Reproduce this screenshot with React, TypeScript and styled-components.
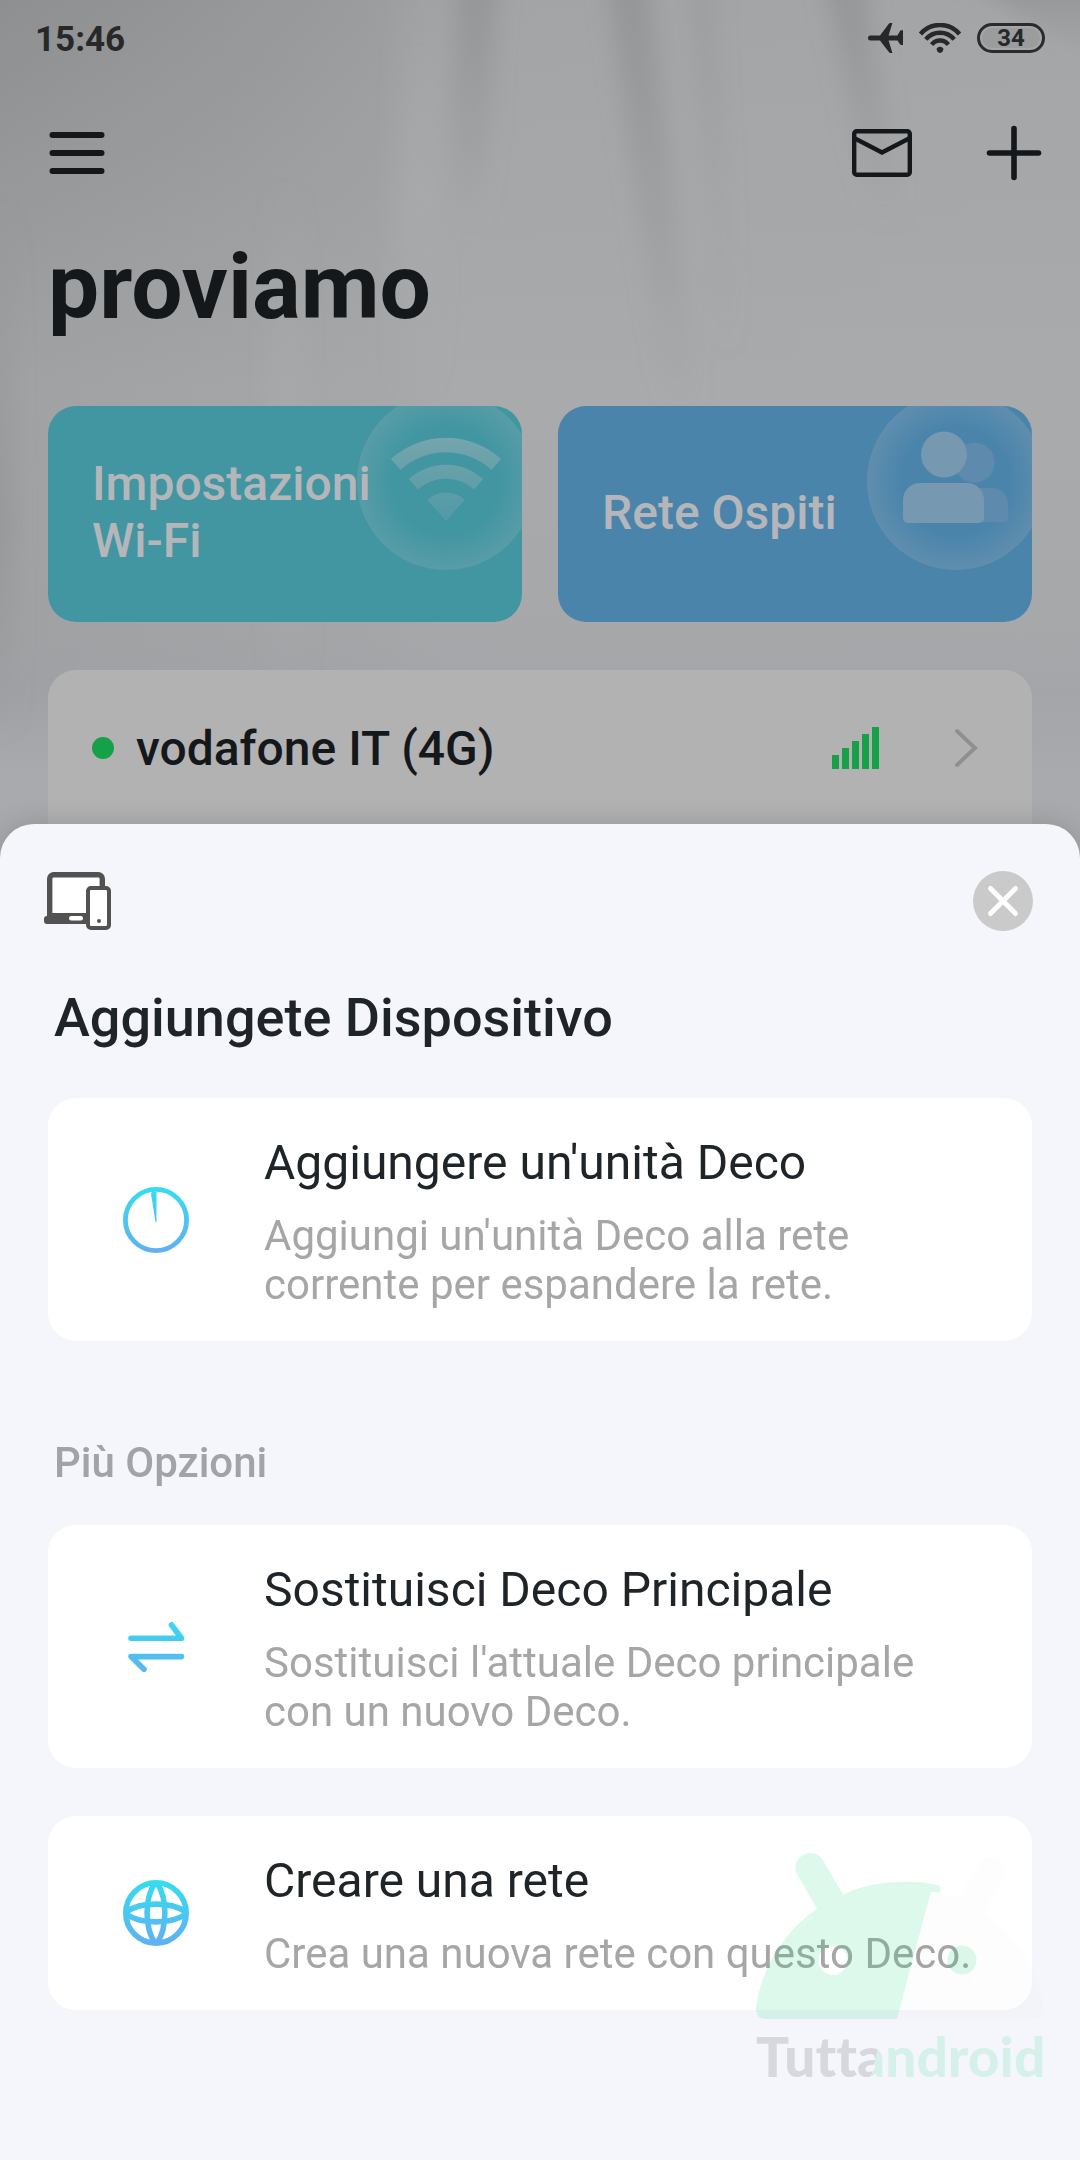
import React from "react";
import styled, { createGlobalStyle } from "styled-components";

const INK = "#14181b";
const FONT = 'Roboto, "Noto Sans", sans-serif';

const GlobalStyle = createGlobalStyle`
  *, *::before, *::after { box-sizing: border-box; }
  html, body { margin: 0; padding: 0; }
  body { background: #a8a9ab; font-family: ${FONT}; }
  button { font-family: inherit; border: 0; margin: 0; padding: 0; background: none; color: inherit; text-align: left; cursor: pointer; }
  h1, h2, h3, p { margin: 0; }
  svg { display: block; flex: none; }
`;

const Screen = styled.div`
  position: relative;
  height: 100vh;
  overflow: hidden;
`;

const Backdrop = styled.svg`
  position: absolute;
  inset: 0 0 auto 0;
  width: 100%;
  height: 860px;
`;

const Dashboard = styled.main`
  position: relative;
`;

const StatusBar = styled.div`
  display: flex;
  align-items: center;
  justify-content: space-between;
  height: 76px;
  padding: 0 35px;
  color: #272829;
`;

const Clock = styled.time`
  padding-top: 3px;
  font-size: 35px;
  line-height: 42px;
  font-weight: 700;
`;

const StatusIcons = styled.div`
  display: flex;
  align-items: center;
  gap: 16px;
`;

const Battery = styled.span`
  display: flex;
  align-items: center;
  justify-content: center;
  width: 68px;
  height: 30px;
  border: 3px solid #2a2b2c;
  border-radius: 15px;
  box-shadow: inset 0 0 0 2px #a5a6a8;
  background: #9b9c9e;
  font-size: 24px;
  line-height: 28px;
  font-weight: 700;
`;

const NavBar = styled.nav`
  display: flex;
  align-items: center;
  justify-content: space-between;
  margin-top: 47px;
  padding: 0 36px 0 47px;
  color: ${INK};
`;

const NavActions = styled.div`
  display: flex;
  gap: 72px;
`;

const IconButton = styled.button`
  display: flex;
  align-items: center;
  justify-content: center;
  width: 60px;
  height: 60px;
`;

const NetworkName = styled.h1`
  margin: 52px 48px 67px;
  font-size: 91px;
  line-height: 104px;
  font-weight: 700;
  color: ${INK};
`;

const Shortcuts = styled.div`
  display: grid;
  grid-template-columns: 1fr 1fr;
  gap: 36px;
  padding: 0 48px;
`;

const Shortcut = styled.button<{ $color: string }>`
  position: relative;
  display: flex;
  align-items: center;
  min-height: 216px;
  padding: 0 44px 4px;
  overflow: hidden;
  border-radius: 28px;
  background: ${(p) => p.$color};
  color: #b4b6ba;
  font-size: 48px;
  line-height: 57px;
  font-weight: 500;
`;

const ShortcutLabel = styled.span`
  position: relative;
  width: min-content;
`;

const WideLabel = styled(ShortcutLabel)`
  width: auto;
`;

const Emblem = styled.svg`
  position: absolute;
  top: -14px;
  right: -13px;
`;

const Connection = styled.button`
  display: flex;
  align-items: flex-start;
  width: calc(100% - 96px);
  min-height: 300px;
  margin: 48px 48px 0;
  padding: 49px 54px 0 44px;
  border-radius: 28px;
  background: #b2b2b2;
`;

const ConnectionRow = styled.span`
  display: flex;
  flex: 1;
  align-items: center;
  color: ${INK};
`;

const Dot = styled.span`
  width: 22px;
  height: 22px;
  margin-right: 22px;
  border-radius: 50%;
  background: #16a149;
`;

const ConnectionName = styled.span`
  flex: 1;
  padding-top: 2px;
  font-size: 48px;
  line-height: 56px;
  font-weight: 500;
`;

const Bars = styled.span`
  display: flex;
  align-items: flex-end;
  gap: 3px;
  margin-right: 75px;
`;

const Bar = styled.span<{ $level: number }>`
  width: 7px;
  height: ${(p) => p.$level * 7 + 7}px;
  background: #16a149;
`;

const Sheet = styled.section`
  position: fixed;
  inset: auto 0 0 0;
  padding: 47px 48px 150px;
  border-radius: 34px 34px 0 0;
  background: #f5f6fc;
  box-shadow: 0 0 28px rgba(0, 0, 0, 0.16);
`;

const SheetHeader = styled.header`
  display: flex;
  align-items: center;
  justify-content: space-between;
  margin: 0 -1px 0 -4px;
`;

const CloseButton = styled(IconButton)`
  border-radius: 50%;
  background: #cacaca;
`;

const SheetTitle = styled.h2`
  margin: 55px 6px 48px;
  font-size: 54px;
  line-height: 64px;
  font-weight: 500;
  color: #1f2428;
`;

const SectionTitle = styled.h3`
  margin: 97px 6px 38px;
  font-size: 42px;
  line-height: 49px;
  font-weight: 500;
  color: #a2a3a8;
`;

const OptionList = styled.div`
  display: grid;
  gap: 48px;
`;

const OptionCard = styled.button`
  display: flex;
  align-items: center;
  gap: 75px;
  width: 100%;
  padding: 0 54px 0 75px;
  border-radius: 28px;
  background: #fff;
`;

const OptionText = styled.span`
  display: grid;
  gap: 20px;
  padding: 37px 0 32px;
`;

const OptionTitle = styled.span`
  font-size: 48px;
  line-height: 56px;
  color: #1f2428;
`;

const OptionDetail = styled.span`
  font-size: 42px;
  line-height: 49px;
  color: #a6a6a6;
`;

const Watermark = styled.div`
  position: absolute;
  right: 36px;
  bottom: 72px;
  width: 288px;
  pointer-events: none;
`;

const WatermarkName = styled.div`
  width: max-content;
  margin-top: 4px;
  font-family: Lato, "Noto Sans", sans-serif;
  font-size: 55px;
  line-height: 64px;
  font-weight: 900;
  font-variant-ligatures: none;
  color: transparent;
  background: linear-gradient(104deg, rgba(0, 0, 0, 0.12) 42%, rgba(30, 214, 130, 0.15) 42%);
  background-clip: text;
  -webkit-background-clip: text;
`;

function BackdropArt() {
  return (
    <Backdrop viewBox="0 0 1080 860" preserveAspectRatio="none" aria-hidden="true">
      <defs>
        <linearGradient id="base" x1="0" y1="0" x2="1" y2="0">
          <stop offset="0" stopColor="#8e8f91" />
          <stop offset="0.2" stopColor="#959698" />
          <stop offset="0.34" stopColor="#9b9c9e" />
          <stop offset="0.42" stopColor="#a3a4a6" />
          <stop offset="1" stopColor="#a4a5a7" />
        </linearGradient>
        <linearGradient id="lift" x1="0" y1="0" x2="0" y2="1">
          <stop offset="0" stopColor="#adaeb0" stopOpacity="0" />
          <stop offset="0.45" stopColor="#adaeb0" stopOpacity="0.6" />
          <stop offset="0.74" stopColor="#a8a9ab" stopOpacity="0.7" />
          <stop offset="0.8" stopColor="#a4a5aa" stopOpacity="0.8" />
          <stop offset="0.9" stopColor="#a9aaad" stopOpacity="1" />
        </linearGradient>
        <linearGradient id="fold" x1="0" y1="0" x2="0" y2="1">
          <stop offset="0" stopColor="#8e8f91" stopOpacity="0.7" />
          <stop offset="1" stopColor="#8e8f91" stopOpacity="0" />
        </linearGradient>
        <linearGradient id="edge" x1="0" y1="0" x2="0" y2="1">
          <stop offset="0" stopColor="#8e8f91" stopOpacity="0" />
          <stop offset="0.6" stopColor="#8e8f91" stopOpacity="0.5" />
          <stop offset="1" stopColor="#8e8f91" stopOpacity="0" />
        </linearGradient>
        <linearGradient id="sheen" x1="0" y1="0" x2="0" y2="1">
          <stop offset="0" stopColor="#b0b1b3" stopOpacity="0" />
          <stop offset="0.5" stopColor="#b0b1b3" stopOpacity="0.35" />
          <stop offset="1" stopColor="#b0b1b3" stopOpacity="0" />
        </linearGradient>
        <filter id="soft" x="-100%" y="-10%" width="300%" height="120%">
          <feGaussianBlur stdDeviation="11 8" />
        </filter>
      </defs>
      <rect width="1080" height="860" fill="url(#base)" />
      <rect width="1080" height="860" fill="url(#lift)" />
      <g filter="url(#soft)">
        <path d="M402-20h40l-6 420h-40z" fill="url(#sheen)" />
        <path d="M456-20h42l-14 250h-38z" fill="url(#fold)" />
        <path d="M606-20h42l52 440h-34z" fill="url(#fold)" />
        <path d="M690-20h22l26 380h-18z" fill="url(#fold)" fillOpacity="0.5" />
        <path d="M824-20h40l40 250h-32z" fill="url(#fold)" />
        <path d="M960-20h140v80z" fill="url(#fold)" />
        <path d="M272 180h28l6 520h-34z" fill="url(#sheen)" />
        <path d="M-20 200h34v540h-34z" fill="url(#edge)" />
      </g>
    </Backdrop>
  );
}

function PlaneIcon() {
  return (
    <svg width="35" height="30" viewBox="0 0 35 30" fill="currentColor" aria-label="Modalità aereo">
      <path d="M2.500 12.400H12L21 .6Q21.500 0 22.400 0H24.400L20.600 12.400H29.500L32 8Q32.500 7.200 33.400 7.200H35V22H33.400Q32.500 22 32 21.200L29.500 17.400H20.600L24.400 30H22.400Q21.500 30 21 29.300L12 17.400H2.500A2.500 2.500 0 0 1 2.500 12.400Z" />
    </svg>
  );
}

function StatusWifiIcon() {
  return (
    <svg width="42" height="30" viewBox="0 0 42 30" fill="none" stroke="currentColor" strokeWidth="4.400" aria-label="Wi-Fi">
      <path d="M1.500 11A25.500 25.500 0 0 1 40.500 11M6.800 16.400A18.500 18.500 0 0 1 35.200 16.400M12.700 21.600A10.500 10.500 0 0 1 29.300 21.600" />
      <path d="M17.200 26Q21 22.500 24.800 26L21 30Z" fill="currentColor" stroke="none" />
      <circle cx="21" cy="26.800" r="3" fill="currentColor" stroke="none" />
    </svg>
  );
}

function Glow({ id }: { id: string }) {
  return (
    <>
      <defs>
        <radialGradient id={id}>
          <stop offset="0.6" stopColor="#b4b6ba" stopOpacity="0" />
          <stop offset="1" stopColor="#b4b6ba" stopOpacity="0.2" />
        </radialGradient>
      </defs>
      <circle cx="89" cy="89" r="89" fill={`url(#${id})`} />
    </>
  );
}

function WifiEmblem() {
  return (
    <Emblem width="178" height="178" viewBox="0 0 178 178" aria-hidden="true">
      <defs>
        <linearGradient id="wave" gradientUnits="userSpaceOnUse" x1="0" y1="46" x2="0" y2="128">
          <stop offset="0" stopColor="#b4b6ba" stopOpacity="0.46" />
          <stop offset="1" stopColor="#b4b6ba" stopOpacity="0.12" />
        </linearGradient>
      </defs>
      <Glow id="glowWifi" />
      <g fill="url(#wave)" stroke="#b4b6ba" strokeOpacity="0.15">
        <path d="M34.100 67.100A82 82 0 0 1 143.900 67.100L134.500 77.500A68 68 0 0 0 43.500 77.500Z" />
        <path d="M52.200 87.100A55 55 0 0 1 125.800 87.100L117 97A42 42 0 0 0 61 97Z" />
        <path d="M70.900 107.900A27 27 0 0 1 107.100 107.900L89 128Z" />
      </g>
    </Emblem>
  );
}

function GuestsEmblem() {
  return (
    <Emblem width="178" height="178" viewBox="0 0 178 178" aria-hidden="true">
      <Glow id="glowGuests" />
      <g fill="#5e8aad">
        <circle cx="107.500" cy="70.500" r="20" />
        <path d="M100 96H125A16 16 0 0 1 141 112V126A4 4 0 0 1 137 130H100Z" />
      </g>
      <g fill="#7698b0">
        <circle cx="77" cy="62.500" r="23" />
        <path d="M53 91H100A17 17 0 0 1 117 108V126A5 5 0 0 1 112 131H41A5 5 0 0 1 36 126V108A17 17 0 0 1 53 91Z" />
      </g>
    </Emblem>
  );
}

function DevicesIcon() {
  return (
    <svg width="68" height="58" viewBox="0 0 68 58" aria-hidden="true">
      <rect x="5.700" y="2.700" width="52.600" height="44" rx="4" fill="#fff" stroke="#525252" strokeWidth="5.400" />
      <path d="M3 41H44V52H3A3 3 0 0 1 0 49V47A3 3 0 0 1 3 44Z" fill="#525252" />
      <rect x="25" y="44" width="14" height="4.500" rx="2.200" fill="#fff" />
      <rect x="44" y="16" width="21" height="40" rx="3" fill="#fff" stroke="#525252" strokeWidth="4" />
      <circle cx="55" cy="49" r="2" fill="#525252" />
    </svg>
  );
}

function Aqua({ id }: { id: string }) {
  return (
    <defs>
      <linearGradient id={id} gradientUnits="userSpaceOnUse" x1="0" y1="2" x2="0" y2="64">
        <stop offset="0" stopColor="#36dcf0" />
        <stop offset="1" stopColor="#60b0f2" />
      </linearGradient>
    </defs>
  );
}

function DecoIcon() {
  return (
    <svg width="66" height="66" viewBox="0 0 66 66" fill="none" aria-hidden="true">
      <Aqua id="aquaDeco" />
      <circle cx="33" cy="33" r="30.600" stroke="url(#aquaDeco)" strokeWidth="4.800" />
      <path d="M28 7Q28 5 30 5H33.500V35H32.500Z" fill="url(#aquaDeco)" />
    </svg>
  );
}

function SwapIcon() {
  return (
    <svg width="66" height="66" viewBox="0 0 66 66" fill="none" aria-hidden="true">
      <Aqua id="aquaSwap" />
      <path
        d="M8 24.300H58.500L48.500 11M58.500 42.600H8L21 55.300"
        stroke="url(#aquaSwap)"
        strokeWidth="5.600"
        strokeLinecap="round"
        strokeLinejoin="round"
      />
    </svg>
  );
}

function GlobeIcon() {
  return (
    <svg width="66" height="66" viewBox="0 0 66 66" fill="none" aria-hidden="true">
      <Aqua id="aquaGlobe" />
      <g stroke="url(#aquaGlobe)" strokeWidth="5.600">
        <circle cx="33" cy="33" r="30.200" />
        <path d="M32 3C21.500 18 21.500 48 32 63M34 3C44.500 18 44.500 48 34 63" />
        <path d="M3 32C18 21.500 48 21.500 63 32M3 34C18 44.500 48 44.500 63 34" />
      </g>
    </svg>
  );
}

function RobotMark() {
  return (
    <svg width="288" height="168" viewBox="0 0 288 168" aria-hidden="true">
      <g fill="rgb(30,214,130)" fillOpacity="0.15">
        <path
          fillRule="evenodd"
          d="M61 57L41.500 23A14.300 14.300 0 0 1 67 8.500L87 42.500C116 29 151 27 182 33Q185 34 184.500 37L183.500 41L175 39.500L141 167H9Q-1 166 0 156C5 117 28 79 61 57ZM77 94A14.500 14.500 0 1 0 77 123A14.500 14.500 0 1 0 77 94Z"
        />
        <circle cx="206" cy="108" r="14.500" />
      </g>
      <path
        d="M175 39.500L203 45L223 12A14 14 0 0 1 248 26L228 61C262 83 284 120 288 160Q288 167 280 167H141Z"
        fillOpacity="0.008"
      />
    </svg>
  );
}

type Option = { title: string; detail: string; icon: React.ReactNode };

const primaryOption: Option = {
  title: "Aggiungere un'unità Deco",
  detail: "Aggiungi un'unità Deco alla rete corrente per espandere la rete.",
  icon: <DecoIcon />,
};

const moreOptions: Option[] = [
  {
    title: "Sostituisci Deco Principale",
    detail: "Sostituisci l'attuale Deco principale con un nuovo Deco.",
    icon: <SwapIcon />,
  },
  {
    title: "Creare una rete",
    detail: "Crea una nuova rete con questo Deco.",
    icon: <GlobeIcon />,
  },
];

function OptionItem({ title, detail, icon }: Option) {
  return (
    <OptionCard type="button">
      {icon}
      <OptionText>
        <OptionTitle>{title}</OptionTitle>
        <OptionDetail>{detail}</OptionDetail>
      </OptionText>
    </OptionCard>
  );
}

export default function App() {
  return (
    <Screen>
      <GlobalStyle />
      <BackdropArt />
      <Dashboard>
        <StatusBar>
          <Clock>15:46</Clock>
          <StatusIcons>
            <PlaneIcon />
            <StatusWifiIcon />
            <Battery>34</Battery>
          </StatusIcons>
        </StatusBar>
        <NavBar>
          <IconButton type="button" aria-label="Menu">
            <svg width="60" height="60" viewBox="0 0 60 60" stroke="currentColor" strokeWidth="6" strokeLinecap="round">
              <path d="M5.500 12H54.500M5.500 30H54.500M5.500 48H54.500" />
            </svg>
          </IconButton>
          <NavActions>
            <IconButton type="button" aria-label="Messaggi">
              <svg width="60" height="60" viewBox="0 0 60 60" fill="none" stroke="currentColor" strokeWidth="4.400">
                <rect x="2.200" y="8.200" width="55.600" height="43.600" rx="2.500" />
                <path d="M3 15.500L30 29.500L57 15.500" />
              </svg>
            </IconButton>
            <IconButton type="button" aria-label="Aggiungi">
              <svg width="60" height="60" viewBox="0 0 60 60" stroke="currentColor" strokeWidth="5.600" strokeLinecap="round">
                <path d="M5.500 30H54.500M30 5.500V54.500" />
              </svg>
            </IconButton>
          </NavActions>
        </NavBar>
        <NetworkName>proviamo</NetworkName>
        <Shortcuts>
          <Shortcut type="button" $color="#4196a2">
            <WifiEmblem />
            <ShortcutLabel>Impostazioni Wi&#8209;Fi</ShortcutLabel>
          </Shortcut>
          <Shortcut type="button" $color="#4a84ab">
            <GuestsEmblem />
            <WideLabel>Rete Ospiti</WideLabel>
          </Shortcut>
        </Shortcuts>
        <Connection type="button">
          <ConnectionRow>
            <Dot />
            <ConnectionName>vodafone IT (4G)</ConnectionName>
            <Bars>
              {[1, 2, 3, 4, 5].map((level) => (
                <Bar key={level} $level={level} />
              ))}
            </Bars>
            <svg width="24" height="40" viewBox="0 0 24 40" fill="none" stroke="#8f8f8f" strokeWidth="3.800" strokeLinecap="round">
              <path d="M3 3L21 20L3 37" />
            </svg>
          </ConnectionRow>
        </Connection>
      </Dashboard>
      <Sheet role="dialog" aria-labelledby="sheet-title">
        <SheetHeader>
          <DevicesIcon />
          <CloseButton type="button" aria-label="Chiudi">
            <svg width="60" height="60" viewBox="0 0 60 60" stroke="#fff" strokeWidth="5" strokeLinecap="round">
              <path d="M17.500 17.500L42.500 42.500M42.500 17.500L17.500 42.500" />
            </svg>
          </CloseButton>
        </SheetHeader>
        <SheetTitle id="sheet-title">Aggiungete Dispositivo</SheetTitle>
        <OptionItem {...primaryOption} />
        <SectionTitle>Più Opzioni</SectionTitle>
        <OptionList>
          {moreOptions.map((option) => (
            <OptionItem key={option.title} {...option} />
          ))}
        </OptionList>
        <Watermark>
          <RobotMark />
          <WatermarkName>Tuttandroid</WatermarkName>
        </Watermark>
      </Sheet>
    </Screen>
  );
}
